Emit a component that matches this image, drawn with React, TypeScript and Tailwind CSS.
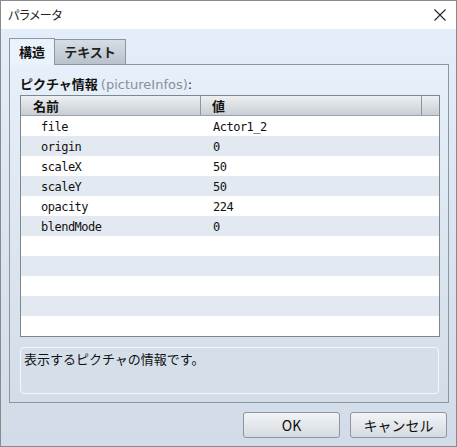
import React from 'react';

const rows = [
  { key: 'file', value: 'Actor1_2' },
  { key: 'origin', value: '0' },
  { key: 'scaleX', value: '50' },
  { key: 'scaleY', value: '50' },
  { key: 'opacity', value: '224' },
  { key: 'blendMode', value: '0' },
  { key: '', value: '' },
  { key: '', value: '' },
  { key: '', value: '' },
  { key: '', value: '' },
  { key: '', value: '' },
];

const jp = "font-['Noto_Sans_CJK_JP','Noto_Sans',sans-serif]";

const App = () => {
  return (
    <div className={`w-[457px] h-[447px] flex flex-col border border-[#8a8a8a] overflow-hidden ${jp}`}>
      {/* title bar */}
      <div className="h-[28px] shrink-0 bg-white flex items-center justify-between pl-[7px] pr-[9px]">
        <span className="text-[12px] text-[#222] leading-none [font-feature-settings:'palt']">パラメータ</span>
        <svg width="12" height="12" viewBox="0 0 12 12" className="mr-[1px]">
          <path d="M0.5 0.5 L11.5 11.5 M11.5 0.5 L0.5 11.5" stroke="#222" strokeWidth="1.1" />
        </svg>
      </div>

      {/* body */}
      <div className="flex-1 flex flex-col bg-gradient-to-b from-[#e3eefa] to-[#d2dce8] px-[8px] pt-[9px]">
        {/* tabs */}
        <div className="flex h-[26px] items-end">
          <div className="h-[27px] w-[46px] border border-b-0 border-[#8e959c] bg-[#eaf2fb] flex items-center justify-center text-[13px] font-bold text-[#111] relative z-10 -mb-px">
            構造
          </div>
          <div className="h-[25px] w-[71px] border border-l-0 border-b-0 border-[#8e959c] bg-gradient-to-b from-[#d6dde5] to-[#b9c2cc] flex items-center justify-center text-[13px] font-bold text-[#222]">
            テキスト
          </div>
        </div>

        {/* panel */}
        <div className="h-[339px] w-[440px] border border-[#8e959c] bg-gradient-to-b from-[#e6f0fb] to-[#d3dde8] px-[10px] pt-[9px]">
          <div className="text-[13px] font-bold leading-[20px] text-[#111] h-[21px]">
            ピクチャ情報{' '}
            <span className="font-normal text-[#8a9099] font-['DejaVu_Sans',sans-serif]">(pictureInfos)</span>
            <span className="font-normal font-['DejaVu_Sans',sans-serif]">:</span>
          </div>

          <div className="w-[420px] border border-[#7f868d] bg-white">
            <div className="flex h-[20px] bg-gradient-to-b from-[#eef0f2] to-[#c8ced4] border-b border-[#9aa1a8] text-[13px] font-bold text-[#111]">
              <div className="w-[180px] border-r border-[#8f969d] pl-[12px] flex items-center">名前</div>
              <div className="w-[221px] border-r border-[#8f969d] pl-[11px] flex items-center">値</div>
              <div className="flex-1" />
            </div>
            {rows.map((r, i) => (
              <div
                key={i}
                className={`flex h-[20px] items-center text-[12px] tracking-[-0.5px] text-[#111] font-['DejaVu_Sans_Mono',monospace] ${
                  i % 2 === 1 ? 'bg-[#e3e9f0]' : 'bg-white'
                }`}
              >
                <div className="w-[180px] pl-[20px] pt-[2px]">{r.key}</div>
                <div className="pl-[12px] pt-[2px]">{r.value}</div>
              </div>
            ))}
          </div>

          <div className="mt-[10px] h-[47px] w-[419px] rounded-[4px] border border-[#f4f8fc] bg-[#d5dfea] px-[3px] pt-[1px] text-[13px] text-[#111]">
            表示するピクチャの情報です。
          </div>
        </div>

        {/* buttons */}
        <div className="flex justify-end gap-[10px] pt-[9px] pr-[1px]">
          <button className="w-[97px] h-[26px] rounded-[3px] border border-[#8e959c] bg-gradient-to-b from-[#f2f4f6] to-[#d5dbe1] text-[14px] text-[#111]">
            OK
          </button>
          <button className="w-[97px] h-[26px] rounded-[3px] border border-[#8e959c] bg-gradient-to-b from-[#f2f4f6] to-[#d5dbe1] text-[14px] text-[#111]">
            キャンセル
          </button>
        </div>
      </div>
    </div>
  );
};

export default App;
